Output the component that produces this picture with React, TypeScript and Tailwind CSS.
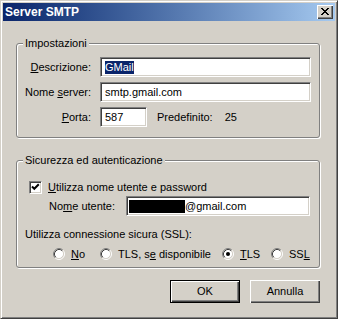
import React from 'react';

const raised =
    'bg-[#D4D0C8] shadow-[inset_1px_1px_0_#fff,inset_-1px_-1px_0_#404040,inset_-2px_-2px_0_#808080]';
const sunken =
    'bg-white border border-t-[#808080] border-l-[#808080] border-b-white border-r-white shadow-[inset_1px_1px_0_#404040,inset_-1px_-1px_0_#D4D0C8]';
const group =
    'rounded-[3px] border border-[#808080] shadow-[1px_1px_0_#fff,inset_1px_1px_0_#fff]';

function Radio({ checked }: { checked?: boolean }) {
    return (
        <svg width="12" height="12" viewBox="0 0 12 12" className="shrink-0">
            <circle cx="6" cy="6" r="4.5" fill="#fff" />
            <path d="M2.11 9.89 A5.5 5.5 0 0 1 9.89 2.11" fill="none" stroke="#808080" />
            <path d="M9.89 2.11 A5.5 5.5 0 0 1 2.11 9.89" fill="none" stroke="#fff" />
            <path d="M2.82 9.18 A4.5 4.5 0 0 1 9.18 2.82" fill="none" stroke="#404040" />
            <path d="M9.18 2.82 A4.5 4.5 0 0 1 2.82 9.18" fill="none" stroke="#D4D0C8" />
            {checked && <circle cx="6" cy="6" r="2" fill="#000" />}
        </svg>
    );
}

function Legend({ children }: { children: React.ReactNode }) {
    return <legend className="ml-[6px] bg-[#D4D0C8] px-[2px] leading-[13px]">{children}</legend>;
}

export default function App() {
    return (
        <div className="h-[319px] w-[338px] bg-[#D4D0C8] font-['Liberation_Sans',Arial,sans-serif] text-[11px] leading-[13px] text-black">
            <div className="flex h-full flex-col border border-t-[#D4D0C8] border-l-[#D4D0C8] border-b-[#404040] border-r-[#404040] p-[2px] shadow-[inset_1px_1px_0_#fff,inset_-1px_-1px_0_#808080]">
                {/* Title bar */}
                <div className="flex h-[18px] items-center justify-between bg-gradient-to-r from-[#0A246A] to-[#A6CAF0] pl-[2px] pr-[2px]">
                    <span className="text-[12px] font-bold text-white">Server SMTP</span>
                    <div className={`flex h-[14px] w-[16px] items-center justify-center ${raised}`}>
                        <svg width="8" height="7" viewBox="0 0 8 7" className="mb-[1px]">
                            <path d="M0 0h2v1h1v1h2V1h1V0h2v1H7v1H6v1H5v1h1v1h1v1h1v1H6V6H5V5H3v1H2v1H0V6h1V5h1V4h1V3H2V2H1V1H0z" fill="#000" />
                        </svg>
                    </div>
                </div>

                {/* Client */}
                <div className="flex flex-col pl-[13px] pr-[15px]">
                    <fieldset className={`mt-[16px] pb-[10px] pr-[8px] pt-[7px] ${group}`}>
                        <Legend>Impostazioni</Legend>
                        <div className="grid grid-cols-[74px_1fr] items-center gap-x-[9px] gap-y-[5px]">
                            <span className="text-right">
                                <u>D</u>escrizione:
                            </span>
                            <div className={`flex h-[20px] items-center pl-[4px] ${sunken}`}>
                                <span className="bg-[#0A246A] text-white">GMail</span>
                            </div>
                            <span className="text-right">
                                Nome <u>s</u>erver:
                            </span>
                            <div className={`flex h-[20px] items-center pl-[4px] ${sunken}`}>smtp.gmail.com</div>
                            <span className="text-right">
                                <u>P</u>orta:
                            </span>
                            <div className="flex items-center">
                                <div className={`flex h-[20px] w-[47px] items-center pl-[4px] ${sunken}`}>587</div>
                                <span className="ml-[10px]">Predefinito:</span>
                                <span className="ml-[12px]">25</span>
                            </div>
                        </div>
                    </fieldset>

                    <fieldset className={`mt-[16px] pb-[7px] pt-[14px] ${group}`}>
                        <Legend>Sicurezza ed autenticazione</Legend>
                        <div className="ml-[12px] flex h-[13px] items-center gap-[6px]">
                            <div className={`relative h-[13px] w-[13px] shrink-0 ${sunken}`}>
                                <svg width="11" height="11" viewBox="0 0 11 11" className="absolute left-0 top-0">
                                    <path d="M2 4.5 L4.3 6.8 L8.8 2.3" fill="none" stroke="#000" strokeWidth="2" />
                                </svg>
                            </div>
                            <span>
                                <u>U</u>tilizza nome utente e password
                            </span>
                        </div>
                        <div className="ml-[32px] mt-[2px] flex items-center">
                            <span className="w-[77px]">
                                No<u>m</u>e utente:
                            </span>
                            <div className={`flex h-[20px] w-[184px] items-center pl-[2px] ${sunken}`}>
                                <span className="h-[13px] w-[56px] bg-black" />
                                <span>@gmail.com</span>
                            </div>
                        </div>
                        <div className="ml-[8px] mt-[12px]">Utilizza connessione sicura (SSL):</div>
                        <div className="ml-[36px] mt-[7px] flex h-[12px] items-center">
                            <div className="flex w-[47px] items-center gap-[6px]">
                                <Radio />
                                <span>
                                    <u>N</u>o
                                </span>
                            </div>
                            <div className="flex w-[122px] items-center gap-[6px]">
                                <Radio />
                                <span>
                                    TLS, s<u>e</u> disponibile
                                </span>
                            </div>
                            <div className="flex w-[49px] items-center gap-[6px]">
                                <Radio checked />
                                <span>
                                    <u>T</u>LS
                                </span>
                            </div>
                            <div className="flex items-center gap-[6px]">
                                <Radio />
                                <span>
                                    SS<u>L</u>
                                </span>
                            </div>
                        </div>
                    </fieldset>

                    <div className="mt-[12px] flex justify-end gap-[10px]">
                        <div className="h-[23px] w-[70px] border border-black">
                            <div className={`flex h-full w-full items-center justify-center ${raised}`}>OK</div>
                        </div>
                        <div className={`flex h-[23px] w-[70px] items-center justify-center ${raised}`}>Annulla</div>
                    </div>
                </div>
            </div>
        </div>
    );
}
